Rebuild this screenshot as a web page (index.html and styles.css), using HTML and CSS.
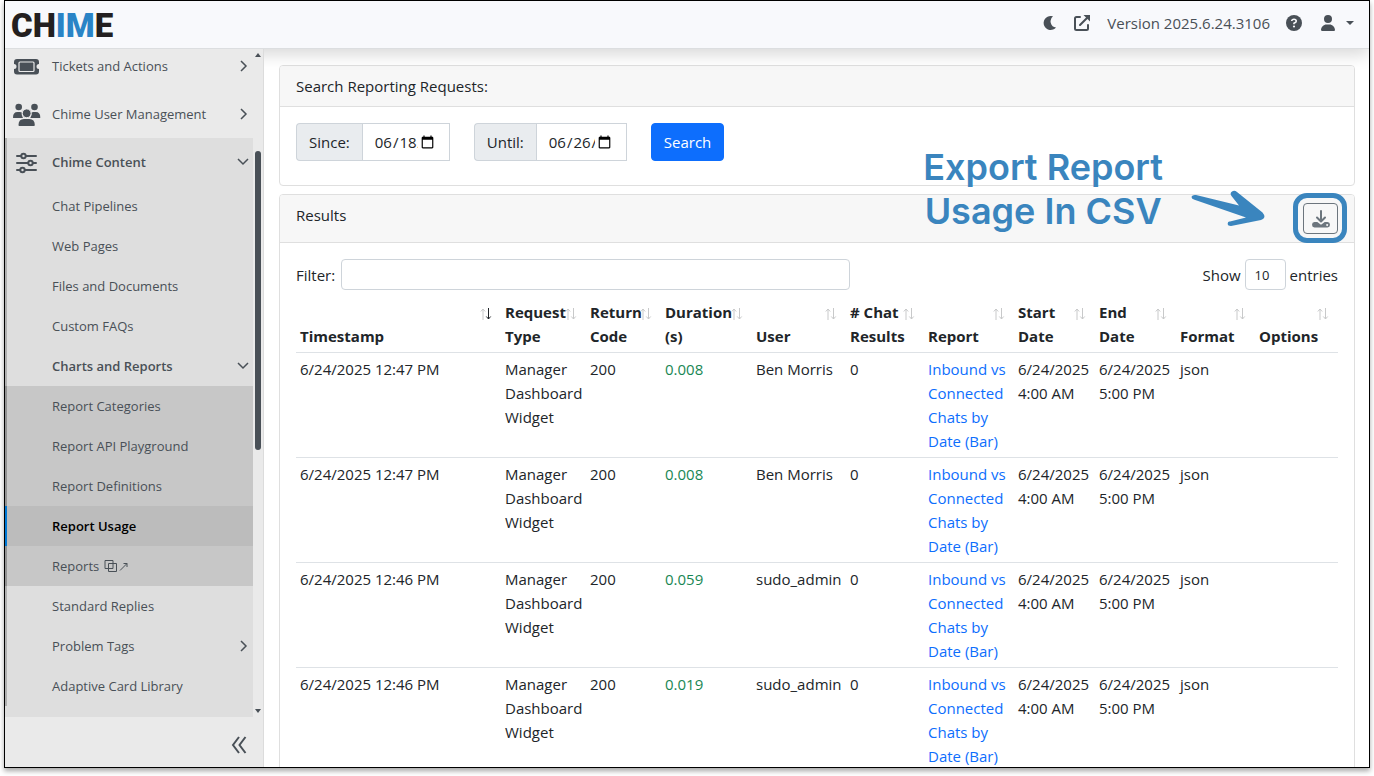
FILE: index.html
```html
<!DOCTYPE html>
<html lang="en">
<head>
    <meta charset="UTF-8">
    <meta name="viewport" content="width=device-width, initial-scale=1.0">
    <title>Chime - Report Usage</title>
    <link rel="stylesheet" href="styles.css">
</head>
<body>
    <svg class="sprite" width="0" height="0" aria-hidden="true">
        <symbol id="chevron-right" viewBox="0 0 10 12">
            <path d="M2 1l5 5-5 5" fill="none" stroke="currentColor" stroke-width="1.5"/>
        </symbol>
        <symbol id="chevron-down" viewBox="0 0 12 10">
            <path d="M1 2l5 5 5-5" fill="none" stroke="currentColor" stroke-width="1.5"/>
        </symbol>
        <symbol id="sort" viewBox="0 0 12 12">
            <path class="sort-up" d="M3 12V1M.8 3.5L3 1l2.200 2.500" fill="none"/>
            <path class="sort-down" d="M8.500 0v11M6.300 8.500L8.500 11l2.200-2.500" fill="none"/>
        </symbol>
    </svg>

    <div class="app">
        <header class="topbar">
            <a class="logo" href="#">CH<span>IM</span>E</a>
            <div class="topbar-actions">
                <button class="icon-btn" aria-label="Dark mode">
                    <svg width="14" height="16" viewBox="0 0 14 16"><path d="M8 1A7 7 0 1 0 13 12.500 6.300 6.300 0 0 1 10 1.300Q9 1 8 1z" fill="currentColor"/></svg>
                </button>
                <button class="icon-btn" aria-label="Open in new window">
                    <svg width="18" height="18" viewBox="0 0 18 18"><path d="M7 3H3.500Q2 3 2 4.500v10Q2 16 3.500 16h10q1.500 0 1.500-1.500V11M7 11l8-8" fill="none" stroke="currentColor" stroke-width="2" stroke-linecap="round"/><path d="M10.500 1H17v6.500z" fill="currentColor"/></svg>
                </button>
                <span class="version">Version 2025.6.24.3106</span>
                <button class="icon-btn" aria-label="Help">
                    <svg width="16" height="16" viewBox="0 0 16 16"><circle cx="8" cy="8" r="8" fill="currentColor"/><path d="M5.700 6Q5.900 4.200 8 4.200t2.300 1.900Q10.300 7.400 8 8.300v.9" fill="none" stroke="#f8f9fc" stroke-width="1.600"/><circle cx="8" cy="11.500" r="1.100" fill="#f8f9fc"/></svg>
                </button>
                <button class="icon-btn user-btn" aria-label="Account">
                    <svg width="14" height="16" viewBox="0 0 448 512"><path fill="currentColor" d="M224 256A128 128 0 1 0 224 0a128 128 0 1 0 0 256zm-45.700 48C79.800 304 0 383.800 0 482.300C0 498.700 13.300 512 29.700 512H418.300c16.400 0 29.700-13.300 29.700-29.700C448 383.800 368.200 304 269.700 304H178.300z"/></svg>
                    <svg width="8" height="4" viewBox="0 0 8 4"><path d="M0 0h8L4 4z" fill="currentColor"/></svg>
                </button>
            </div>
        </header>

        <div class="layout">
            <aside class="sidebar">
                <div class="sidebar-scroll">
                    <nav class="nav">
                        <a class="nav-item" href="#">
                            <svg class="nav-icon" width="28" height="24" viewBox="0 0 28 24"><path d="M4 5h19q3 0 3 3v2a2.500 2.500 0 0 0 0 5v2.500q0 3-3 3H4q-3 0-3-3V15a2.500 2.500 0 0 0 0-5V8q0-3 3-3z" fill="currentColor"/><rect x="6" y="8" width="15" height="9.500" rx="1" fill="currentColor" stroke="#eaeaea" stroke-width="1.200"/></svg>
                            <span>Tickets and Actions</span>
                            <svg class="chevron" width="10" height="12"><use href="#chevron-right"/></svg>
                        </a>
                        <a class="nav-item" href="#">
                            <svg class="nav-icon" width="28" height="24" viewBox="0 0 28 24"><g fill="currentColor"><circle cx="5.700" cy="5" r="3.300"/><circle cx="21.500" cy="5" r="3.300"/><path d="M0 15.500Q0 10 4.500 10H7q1 0 1.800.5-.8 2.800 1.200 5.500H.8q-.8 0-.8-.5zM27.300 15.500Q27.300 10 22.800 10h-2.500q-1 0-1.800.5.800 2.800-1.200 5.500h9.200q.8 0 .8-.5zM5.500 23Q5.500 17 11 17h5.300q5.500 0 5.500 6 0 1-.8 1H6.300q-.8 0-.8-1z"/><circle cx="13.700" cy="11.300" r="4.400" stroke="#eaeaea"/></g></svg>
                            <span>Chime User Management</span>
                            <svg class="chevron" width="10" height="12"><use href="#chevron-right"/></svg>
                        </a>
                        <div class="nav-group">
                            <a class="nav-item open" href="#">
                                <svg class="nav-icon" width="28" height="24" viewBox="0 0 28 24"><g fill="#dedede" stroke="currentColor" stroke-width="2" stroke-linecap="round"><path d="M4 6h19M4 13h19M4 20h19"/><circle cx="10.500" cy="6" r="2.200"/><circle cx="17.500" cy="13" r="2.200"/><circle cx="9.500" cy="20" r="2.200"/></g></svg>
                                <span>Chime Content</span>
                                <svg class="chevron" width="12" height="10"><use href="#chevron-down"/></svg>
                            </a>
                            <a class="nav-sub" href="#">Chat Pipelines</a>
                            <a class="nav-sub" href="#">Web Pages</a>
                            <a class="nav-sub" href="#">Files and Documents</a>
                            <a class="nav-sub" href="#">Custom FAQs</a>
                            <a class="nav-sub open" href="#">
                                <span>Charts and Reports</span>
                                <svg class="chevron" width="12" height="10"><use href="#chevron-down"/></svg>
                            </a>
                            <div class="nav-nested">
                                <a class="nav-sub" href="#">Report Categories</a>
                                <a class="nav-sub" href="#">Report API Playground</a>
                                <a class="nav-sub" href="#">Report Definitions</a>
                                <a class="nav-sub active" href="#">Report Usage</a>
                                <a class="nav-sub" href="#">Reports
                                    <svg class="external" width="24" height="14" viewBox="0 0 24 14"><path d="M1 1.500h8v8H1zM4.500 4.500h8v8h-8zM16 11.500l7-7M19.500 4.500H23V8" fill="none" stroke="currentColor"/></svg>
                                </a>
                            </div>
                            <a class="nav-sub" href="#">Standard Replies</a>
                            <a class="nav-sub" href="#">
                                <span>Problem Tags</span>
                                <svg class="chevron" width="10" height="12"><use href="#chevron-right"/></svg>
                            </a>
                            <a class="nav-sub" href="#">Adaptive Card Library</a>
                        </div>
                    </nav>
                    <div class="scrollbar">
                        <svg width="6" height="4" viewBox="0 0 6 4"><path d="M0 4h6L3 0z" fill="currentColor"/></svg>
                        <div class="track"><div class="thumb"></div></div>
                        <svg width="6" height="4" viewBox="0 0 6 4"><path d="M0 0h6L3 4z" fill="currentColor"/></svg>
                    </div>
                </div>
                <div class="sidebar-footer">
                    <button class="icon-btn" aria-label="Collapse menu">
                        <svg width="16" height="18" viewBox="0 0 16 18"><path d="M8 1L2 9l6 8M14.500 1l-6 8 6 8" fill="none" stroke="currentColor" stroke-width="2"/></svg>
                    </button>
                </div>
            </aside>

            <main class="content">
                <section class="card">
                    <div class="card-header">Search Reporting Requests:</div>
                    <form class="search-form">
                        <div class="input-group">
                            <label for="since">Since:</label>
                            <input type="date" id="since" value="2025-06-18">
                        </div>
                        <div class="input-group">
                            <label for="until">Until:</label>
                            <input type="date" id="until" class="wide" value="2025-06-26">
                        </div>
                        <button type="button" class="btn-primary">Search</button>
                    </form>
                </section>

                <section class="card results">
                    <div class="card-header results-header">
                        <span>Results</span>
                        <button class="btn-export" aria-label="Export CSV">
                            <svg width="18" height="18" viewBox="0 0 18 18"><path d="M9 1v10M5 7.500l4 4 4-4" fill="none" stroke="currentColor" stroke-width="2" stroke-linecap="round" stroke-linejoin="round"/><path fill-rule="evenodd" d="M2.500 12h2.800L9 14.800l3.700-2.800h2.800q2.500.300 2.500 2.800T15.500 17.600h-13Q0 17.300 0 14.800T2.500 12zm12.600 2a1 1 0 1 0 .1 0z" fill="currentColor"/></svg>
                        </button>
                        <div class="callout">
                            <p>Export Report<br>Usage In CSV</p>
                            <svg width="74" height="38" viewBox="0 0 74 38"><path d="M5 6l43 10.500L40.500 7Q38.500 4 41 2.500t5 .5l25.500 20.500Q76 29 70 31l-30 6q-3.500 0-3.300-2.500T39 32.500L55 28.500 3.500 10.800Q0 9.500.7 7.500T5 6z" fill="#3a85be"/></svg>
                            <div class="ring"></div>
                        </div>
                    </div>
                    <div class="card-body">
                        <div class="table-tools">
                            <label for="filter">Filter:</label>
                            <input type="text" id="filter">
                            <div class="page-size">
                                <label for="entries">Show</label>
                                <select id="entries"><option>10</option></select>
                                <span>entries</span>
                            </div>
                        </div>
                        <table>
                            <colgroup>
                                <col>
                                <col class="c-type">
                                <col class="c-code">
                                <col class="c-duration">
                                <col class="c-user">
                                <col class="c-chat">
                                <col class="c-report">
                                <col class="c-date">
                                <col class="c-date">
                                <col class="c-format">
                                <col class="c-options">
                            </colgroup>
                            <thead>
                                <tr>
                                    <th>Timestamp<svg class="sort sorted" width="12" height="12"><use href="#sort"/></svg></th>
                                    <th>Request Type<svg class="sort" width="12" height="12"><use href="#sort"/></svg></th>
                                    <th>Return Code<svg class="sort" width="12" height="12"><use href="#sort"/></svg></th>
                                    <th>Duration (s)<svg class="sort" width="12" height="12"><use href="#sort"/></svg></th>
                                    <th>User<svg class="sort" width="12" height="12"><use href="#sort"/></svg></th>
                                    <th># Chat Results<svg class="sort" width="12" height="12"><use href="#sort"/></svg></th>
                                    <th>Report<svg class="sort" width="12" height="12"><use href="#sort"/></svg></th>
                                    <th>Start<br>Date<svg class="sort" width="12" height="12"><use href="#sort"/></svg></th>
                                    <th>End<br>Date<svg class="sort" width="12" height="12"><use href="#sort"/></svg></th>
                                    <th>Format<svg class="sort" width="12" height="12"><use href="#sort"/></svg></th>
                                    <th>Options<svg class="sort" width="12" height="12"><use href="#sort"/></svg></th>
                                </tr>
                            </thead>
                            <tbody>
                                <tr>
                                    <td>6/24/2025 12:47 PM</td>
                                    <td>Manager Dashboard Widget</td>
                                    <td>200</td>
                                    <td class="ok">0.008</td>
                                    <td>Ben Morris</td>
                                    <td>0</td>
                                    <td><a href="#">Inbound vs Connected Chats by Date (Bar)</a></td>
                                    <td>6/24/2025 4:00 AM</td>
                                    <td>6/24/2025 5:00 PM</td>
                                    <td>json</td>
                                    <td></td>
                                </tr>
                                <tr>
                                    <td>6/24/2025 12:47 PM</td>
                                    <td>Manager Dashboard Widget</td>
                                    <td>200</td>
                                    <td class="ok">0.008</td>
                                    <td>Ben Morris</td>
                                    <td>0</td>
                                    <td><a href="#">Inbound vs Connected Chats by Date (Bar)</a></td>
                                    <td>6/24/2025 4:00 AM</td>
                                    <td>6/24/2025 5:00 PM</td>
                                    <td>json</td>
                                    <td></td>
                                </tr>
                                <tr>
                                    <td>6/24/2025 12:46 PM</td>
                                    <td>Manager Dashboard Widget</td>
                                    <td>200</td>
                                    <td class="ok">0.059</td>
                                    <td>sudo_admin</td>
                                    <td>0</td>
                                    <td><a href="#">Inbound vs Connected Chats by Date (Bar)</a></td>
                                    <td>6/24/2025 4:00 AM</td>
                                    <td>6/24/2025 5:00 PM</td>
                                    <td>json</td>
                                    <td></td>
                                </tr>
                                <tr>
                                    <td>6/24/2025 12:46 PM</td>
                                    <td>Manager Dashboard Widget</td>
                                    <td>200</td>
                                    <td class="ok">0.019</td>
                                    <td>sudo_admin</td>
                                    <td>0</td>
                                    <td><a href="#">Inbound vs Connected Chats by Date (Bar)</a></td>
                                    <td>6/24/2025 4:00 AM</td>
                                    <td>6/24/2025 5:00 PM</td>
                                    <td>json</td>
                                    <td></td>
                                </tr>
                            </tbody>
                        </table>
                    </div>
                </section>
            </main>
        </div>
    </div>
</body>
</html>
```
FILE: styles.css
```css
* {
    box-sizing: border-box;
}

body {
    margin: 0;
    padding: 0 4px 8px;
    height: 100vh;
    background: #fff;
    color: #212529;
    font-family: "Open Sans", "Noto Sans", sans-serif;
    font-size: 15px;
    line-height: 24px;
    overflow: hidden;
}

button, input, select {
    font: inherit;
    color: inherit;
    margin: 0;
}

a {
    color: #0d6efd;
    text-decoration: none;
}

.sprite {
    position: absolute;
}

.app {
    height: 100%;
    display: flex;
    flex-direction: column;
    border: 1px solid #000;
    box-shadow: 0 3px 5px rgba(0, 0, 0, 0.35);
    overflow: hidden;
}

/* top bar */
.topbar {
    display: flex;
    align-items: center;
    justify-content: space-between;
    height: 48px;
    flex-shrink: 0;
    padding: 0 15px 3px 6px;
    background: #f8f9fc;
    border-bottom: 1px solid #dcdee0;
    box-shadow: 0 6px 16px rgba(0, 0, 0, 0.15);
    z-index: 1;
}

.logo {
    padding-top: 6px;
    font-family: Roboto, sans-serif;
    font-size: 33px;
    font-weight: 900;
    line-height: 40px;
    color: #231f20;
}

.logo span {
    color: #2a84c6;
}

.topbar-actions {
    display: flex;
    align-items: center;
    gap: 16px;
    color: #495057;
}

.icon-btn {
    display: flex;
    align-items: center;
    padding: 0;
    border: none;
    background: none;
    color: #495057;
    cursor: pointer;
}

.user-btn {
    gap: 11px;
    margin-left: 3px;
}

.layout {
    display: flex;
    flex: 1;
    min-height: 0;
}

/* sidebar */
.sidebar {
    display: flex;
    flex-direction: column;
    width: 259px;
    flex-shrink: 0;
    background: #eaeaea;
    border-right: 1px solid #dcdcdc;
    font-size: 13px;
    z-index: 2;
}

.sidebar-scroll {
    display: flex;
    flex: 1;
    min-height: 0;
    overflow: hidden;
}

.nav {
    flex: 1;
    margin-top: -7px;
}

.nav a {
    display: flex;
    align-items: center;
    color: #495057;
    border-left: 2px solid transparent;
}

.nav-item {
    height: 48px;
    padding: 0 4px 0 6px;
}

.nav-icon {
    margin-right: 11px;
}

.nav-sub {
    height: 40px;
    padding: 0 4px 0 45px;
}

.nav .open {
    font-weight: 600;
}

.chevron {
    margin-left: auto;
}

.external {
    margin-left: 5px;
}

.nav-group {
    background: #dedede;
    padding-bottom: 12px;
}

.nav .nav-group > a {
    border-left-color: #b0b0b0;
}

.nav-nested {
    background: #c7c7c7;
}

.nav .nav-nested a {
    border-left-color: #929292;
}

.nav .nav-nested .active {
    background: #bcbcbc;
    border-left-color: #0078d4;
    color: #000;
    font-weight: 600;
}

.scrollbar {
    display: flex;
    flex-direction: column;
    align-items: center;
    width: 10px;
    padding: 4px 0;
    color: #495057;
}

.track {
    flex: 1;
    display: grid;
    grid-template-rows: 94fr 298fr 259fr;
}

.thumb {
    grid-row: 2;
    width: 6px;
    border-radius: 3px;
    background: #495057;
}

.sidebar-footer {
    display: flex;
    align-items: center;
    justify-content: flex-end;
    height: 50px;
    padding: 6px 16px 0 0;
}

/* main content */
.content {
    flex: 1;
    min-width: 0;
    display: flex;
    flex-direction: column;
    gap: 8px;
    padding: 16px 14px 0 15px;
    overflow: hidden;
}

.card {
    border: 1px solid #dfdfdf;
    border-radius: 4px;
}

.card-header {
    padding: 8px 16px;
    background: #f7f7f7;
    border-bottom: 1px solid #dfdfdf;
    border-radius: 3px 3px 0 0;
}

.search-form {
    display: flex;
    gap: 24px;
    padding: 16px 16px 24px;
}

.input-group {
    display: flex;
    height: 38px;
}

.input-group label {
    padding: 6px 12px;
    background: #e9ecef;
    border: 1px solid #ced4da;
    border-right: none;
    border-radius: 4px 0 0 4px;
}

.input-group input {
    width: 88px;
    padding: 6px 12px 6px 11px;
    border: 1px solid #ced4da;
    background: #fff;
}

.input-group .wide {
    width: 91px;
}

.btn-primary {
    padding: 6px 12px;
    border: 1px solid #0d6efd;
    border-radius: 4px;
    background: #0d6efd;
    color: #fff;
    cursor: pointer;
}

.results {
    flex: 1 0 auto;
}

.results-header {
    position: relative;
    display: flex;
    justify-content: space-between;
}

.btn-export {
    display: flex;
    align-items: center;
    justify-content: center;
    width: 35px;
    height: 31px;
    border: 1px solid #6c757d;
    border-radius: 4px;
    background: none;
    color: #6c757d;
    cursor: pointer;
}

/* callout drawn over the cards */
.callout {
    position: absolute;
    right: 7px;
    bottom: -1px;
    display: flex;
    align-items: flex-end;
    pointer-events: none;
}

.callout p {
    margin: 0 28px 10px 0;
    font-family: Inter, sans-serif;
    font-size: 36px;
    font-weight: 600;
    line-height: 44px;
    text-align: center;
    color: #3a85be;
}

.callout svg {
    margin: 0 28px 16px 0;
}

.ring {
    width: 54px;
    height: 50px;
    border: 5px solid #3a85be;
    border-radius: 14px;
}

.card-body {
    padding: 16px;
}

.table-tools {
    display: flex;
    align-items: center;
    margin-bottom: 6px;
}

.table-tools input {
    width: 509px;
    height: 31px;
    margin-left: 6px;
    padding: 4px 8px;
    border: 1px solid #ced4da;
    border-radius: 4px;
}

.page-size {
    display: flex;
    align-items: center;
    gap: 4px;
    margin-left: auto;
}

.page-size select {
    appearance: none;
    width: 41px;
    height: 31px;
    padding: 0 9px;
    border: 1px solid #ced4da;
    border-radius: 4px;
    background: #fff;
    font-size: 13px;
}

table {
    width: 100%;
    table-layout: fixed;
    border-collapse: separate;
    border-spacing: 0;
}

th, td {
    position: relative;
    padding: 4px;
    border-bottom: 1px solid #dee2e6;
    text-align: left;
    vertical-align: top;
}

th {
    vertical-align: bottom;
    font-weight: 700;
}

td:nth-child(n+8) {
    padding-right: 0;
}

.ok {
    color: #198754;
}

.c-type { width: 85px; }
.c-code { width: 75px; }
.c-duration { width: 91px; }
.c-user { width: 94px; }
.c-chat { width: 78px; }
.c-report { width: 90px; }
.c-date { width: 81px; }
.c-format { width: 79px; }
.c-options { width: 83px; }

.sort {
    position: absolute;
    top: 12px;
    right: 9px;
    stroke: #c8c9ca;
}

.sorted {
    --down: #212529;
}

.sort-down {
    stroke: var(--down, #c8c9ca);
}
```
